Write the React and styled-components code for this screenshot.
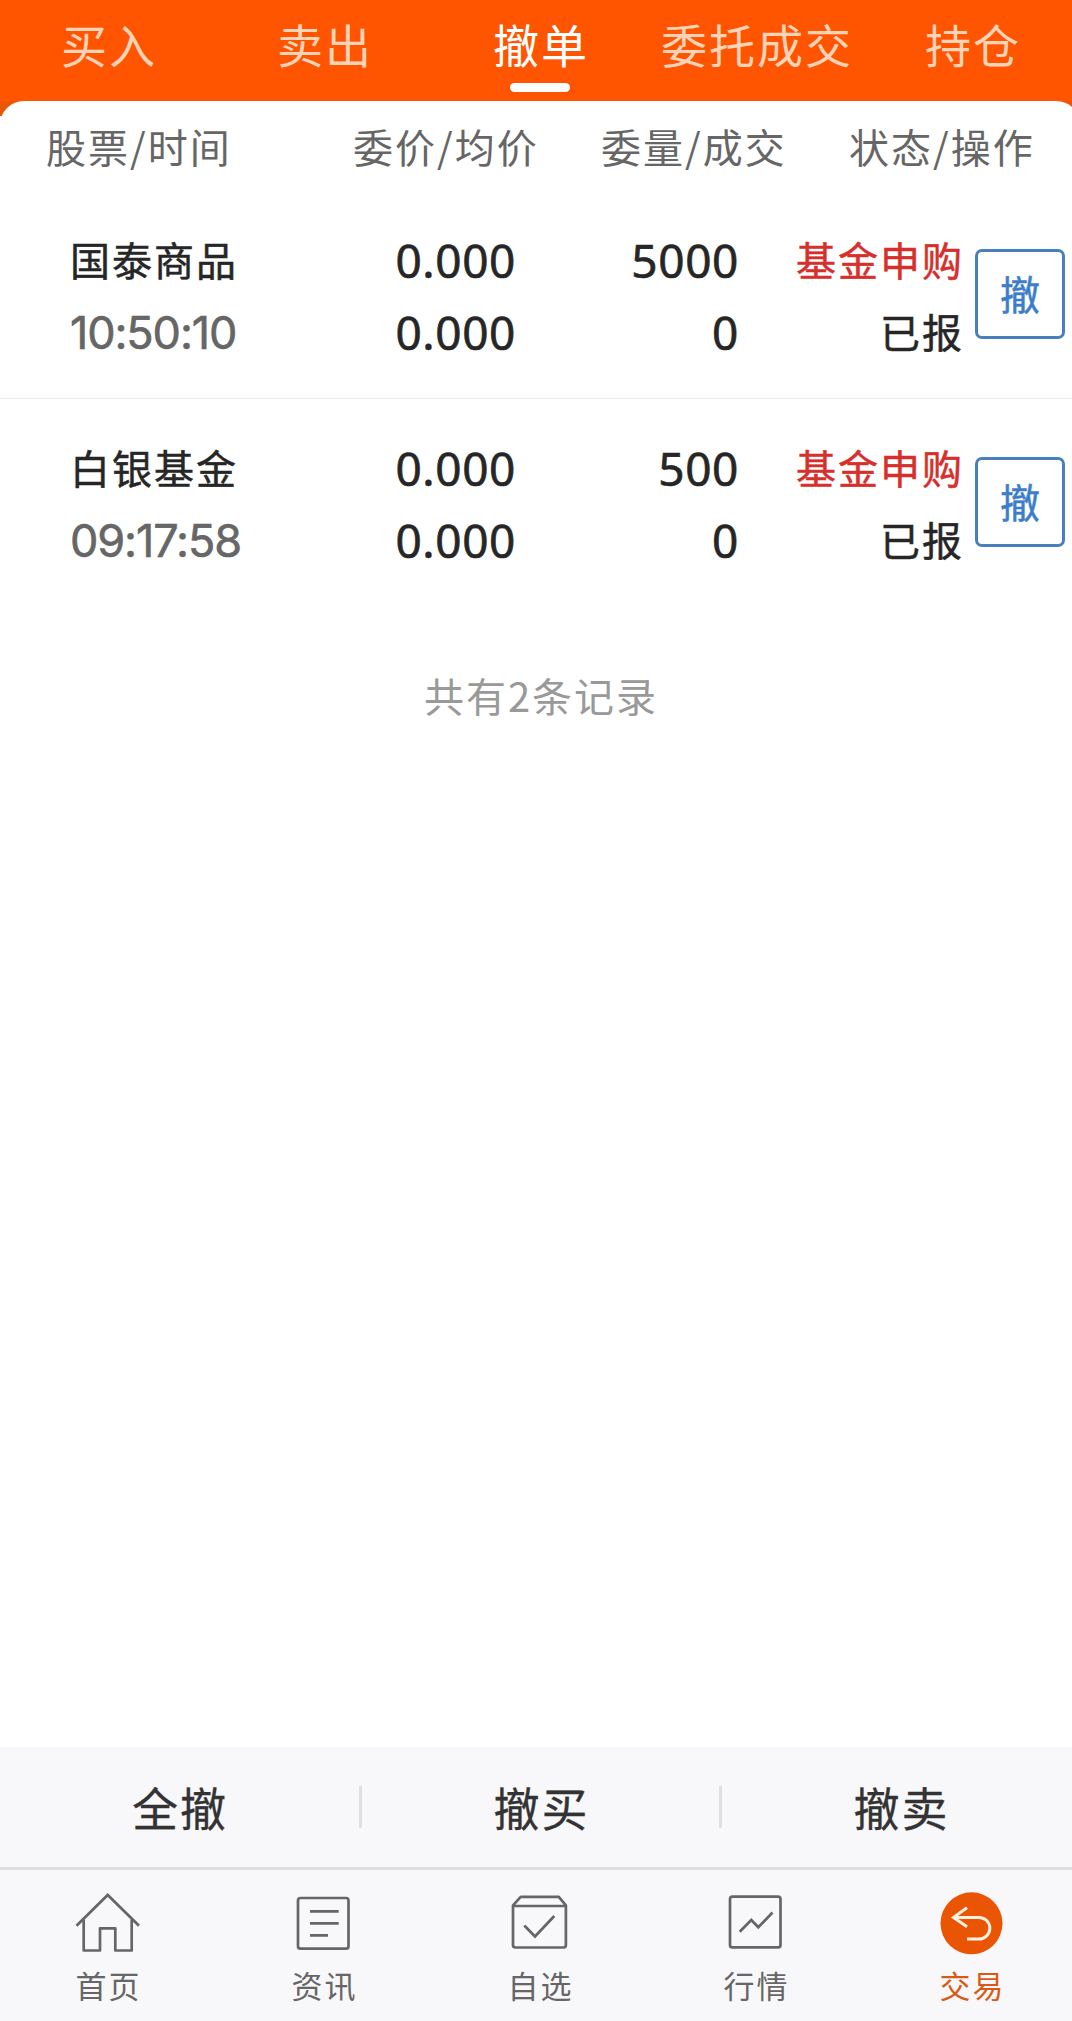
import React from "react";
import styled, { createGlobalStyle } from "styled-components";

const GlobalStyle = createGlobalStyle`
  * { box-sizing: border-box; }
  html, body { margin: 0; padding: 0; background: #fff; overflow: hidden; }
  body { font-family: "Noto Sans CJK SC", sans-serif; letter-spacing: 2px; }
  button { font: inherit; letter-spacing: inherit; margin: 0; padding: 0; background: none; border: 0; }
`;

const Screen = styled.div`
  width: 1080px;
  height: 2021px;
  display: flex;
  flex-direction: column;
  overflow: hidden;
`;

const Tabs = styled.nav`
  flex: none;
  height: 101px;
  display: grid;
  grid-template-columns: repeat(5, 1fr);
  background: #ff5500;
`;

const Tab = styled.button`
  display: flex;
  flex-direction: column;
  align-items: center;
  padding: 9px 0 0 2px;
  font-size: 46px;
  line-height: 68px;
  white-space: nowrap;
  color: ${(p) => (p.$active ? "#fff" : "#ffd3b8")};
`;

const Underline = styled.span`
  width: 60px;
  height: 9px;
  margin: 6px 2px 0 0;
  border-radius: 5px;
  background: #fff;
`;

const PanelBack = styled.div`
  flex: 1;
  display: flex;
  background: linear-gradient(#ea5606 0 15px, #fff 15px);
`;

const Panel = styled.main`
  flex: 1;
  background: #fff;
  border-radius: 24px 24px 0 0;
`;

const ColumnHeads = styled.div`
  height: 90px;
  padding: 15px 45px 0 46px;
  display: grid;
  grid-template-columns: 307px 248px 248px 186px;
  font-size: 40px;
  line-height: 60px;
  color: #666;
  white-space: nowrap;
`;

const Order = styled.section`
  height: 208px;
  padding: 0 15px 2px 70px;
  display: grid;
  grid-template-columns: 206px 240px 223px 225px 1fr;
  align-items: center;
  border-bottom: 1px solid ${(p) => (p.$last ? "transparent" : "#ebebeb")};
`;

const Pair = styled.div`
  display: flex;
  flex-direction: column;
  align-items: ${(p) => (p.$start ? "flex-start" : "flex-end")};
  padding-top: 6px;
`;

const Label = styled.span`
  height: 72px;
  font-size: 40px;
  line-height: 68px;
  white-space: nowrap;
  color: ${(p) => p.$color || "#262626"};
  -webkit-text-stroke: 0.5px currentColor;
`;

const Figure = styled.span`
  height: 72px;
  font-family: "Noto Sans", sans-serif;
  font-size: 46px;
  line-height: 71px;
  letter-spacing: 0.6px;
  white-space: nowrap;
  color: #262626;
  -webkit-text-stroke: 0.6px currentColor;
`;

const Time = styled.span`
  height: 72px;
  font-family: Inter, sans-serif;
  font-size: 45px;
  line-height: 72px;
  letter-spacing: -1.1px;
  white-space: nowrap;
  color: #666;
  -webkit-text-stroke: 0.6px currentColor;
`;

const CancelButton = styled.button`
  width: 90px;
  height: 90px;
  justify-self: end;
  display: flex;
  align-items: center;
  justify-content: center;
  padding: 0 0 2px 2px;
  border: 3px solid #4880bd;
  border-radius: 7px;
  font-size: 40px;
  line-height: 60px;
  color: #3c7ecb;
  -webkit-text-stroke: 0.5px currentColor;
`;

const Summary = styled.p`
  margin: 58px 0 0;
  padding-left: 2px;
  text-align: center;
  font-size: 40px;
  line-height: 60px;
  color: #999;
`;

const BatchBar = styled.div`
  flex: none;
  height: 120px;
  display: grid;
  grid-template-columns: repeat(3, 1fr);
  background: #f8f8fb;
`;

const BatchButton = styled.button`
  position: relative;
  padding: 0 0 3px 0;
  font-size: 46px;
  line-height: 68px;
  color: #333;
  -webkit-text-stroke: 0.3px currentColor;

  & + & {
    padding-left: 3px;
  }

  & + &::before {
    content: "";
    position: absolute;
    left: -1px;
    top: 39px;
    width: 3px;
    height: 42px;
    background: #dfdfe1;
  }
`;

const BottomNav = styled.nav`
  flex: none;
  height: 154px;
  display: grid;
  grid-template-columns: repeat(5, 1fr);
  border-top: 3px solid #dfdfe1;
  background: #f8f8fb;
`;

const NavItem = styled.button`
  display: flex;
  flex-direction: column;
  align-items: center;
  justify-content: flex-start;
  padding-top: 20px;
  font-size: 31px;
  line-height: 46px;
  color: ${(p) => (p.$active ? "#d85a16" : "#666")};
`;

const NavIcon = styled.svg`
  width: 66px;
  height: 66px;
  margin-bottom: 6px;
  fill: none;
  stroke: #666;
  stroke-width: 2.7;
`;

const NavText = styled.span`
  padding-left: 1px;
`;

const icons = {
  home: (
    <>
      <path d="M1.5 35.8 32.7 5 64 35.8" />
      <path d="M8.7 29.5V60.5H25V38.3H40.3V60.5H56.7V29.5" strokeLinejoin="round" />
    </>
  ),
  news: (
    <>
      <rect x="7" y="8" width="50.5" height="50.7" rx="2.5" />
      <path d="M19 21.3H47.7M19 33.3H47.7M19 45.3H37" />
    </>
  ),
  watch: (
    <>
      <path d="M6 15.3 13.7 6.8H51.8L58.9 15.3V55Q58.9 57.5 56.4 57.5H8.5Q6 57.5 6 55ZM6 16H58.9" strokeLinejoin="round" />
      <path d="M17.3 35.5 28 46.5 47.3 26" />
    </>
  ),
  market: (
    <>
      <rect x="7" y="6.7" width="50.5" height="50.7" rx="2.5" />
      <path d="M16.7 41.7 28.3 30 35.3 37.3 49.5 22.5" />
    </>
  ),
  trade: (
    <>
      <circle cx="32.5" cy="33.3" r="31" fill="#ea5504" stroke="none" />
      <path d="M28 17.7 14.5 27.4 28 36.8M15 27.4H40A10.8 10.8 0 0 1 40 49H28" stroke="#fff0df" strokeWidth="3" />
    </>
  ),
};

const tabs = ["买入", "卖出", "撤单", "委托成交", "持仓"];
const heads = ["股票/时间", "委价/均价", "委量/成交", "状态/操作"];
const orders = [
  { name: "国泰商品", time: "10:50:10", price: "0.000", average: "0.000", amount: "5000", filled: "0", kind: "基金申购", state: "已报" },
  { name: "白银基金", time: "09:17:58", price: "0.000", average: "0.000", amount: "500", filled: "0", kind: "基金申购", state: "已报" },
];
const navItems = [
  ["home", "首页"],
  ["news", "资讯"],
  ["watch", "自选"],
  ["market", "行情"],
  ["trade", "交易"],
];

export default function App() {
  return (
    <Screen>
      <GlobalStyle />
      <Tabs>
        {tabs.map((t) => (
          <Tab key={t} $active={t === "撤单"}>
            {t}
            {t === "撤单" && <Underline />}
          </Tab>
        ))}
      </Tabs>
      <PanelBack>
        <Panel>
          <ColumnHeads>
            {heads.map((h) => (
              <span key={h}>{h}</span>
            ))}
          </ColumnHeads>
          {orders.map((o, i) => (
            <Order key={o.name} $last={i === orders.length - 1}>
              <Pair $start>
                <Label>{o.name}</Label>
                <Time>{o.time}</Time>
              </Pair>
              <Pair>
                <Figure>{o.price}</Figure>
                <Figure>{o.average}</Figure>
              </Pair>
              <Pair>
                <Figure>{o.amount}</Figure>
                <Figure>{o.filled}</Figure>
              </Pair>
              <Pair>
                <Label $color="#d62f2c">{o.kind}</Label>
                <Label>{o.state}</Label>
              </Pair>
              <CancelButton>撤</CancelButton>
            </Order>
          ))}
          <Summary>共有2条记录</Summary>
        </Panel>
      </PanelBack>
      <BatchBar>
        {["全撤", "撤买", "撤卖"].map((b) => (
          <BatchButton key={b}>{b}</BatchButton>
        ))}
      </BatchBar>
      <BottomNav>
        {navItems.map(([icon, text]) => (
          <NavItem key={icon} $active={icon === "trade"}>
            <NavIcon viewBox="0 0 66 66">{icons[icon]}</NavIcon>
            <NavText>{text}</NavText>
          </NavItem>
        ))}
      </BottomNav>
    </Screen>
  );
}
